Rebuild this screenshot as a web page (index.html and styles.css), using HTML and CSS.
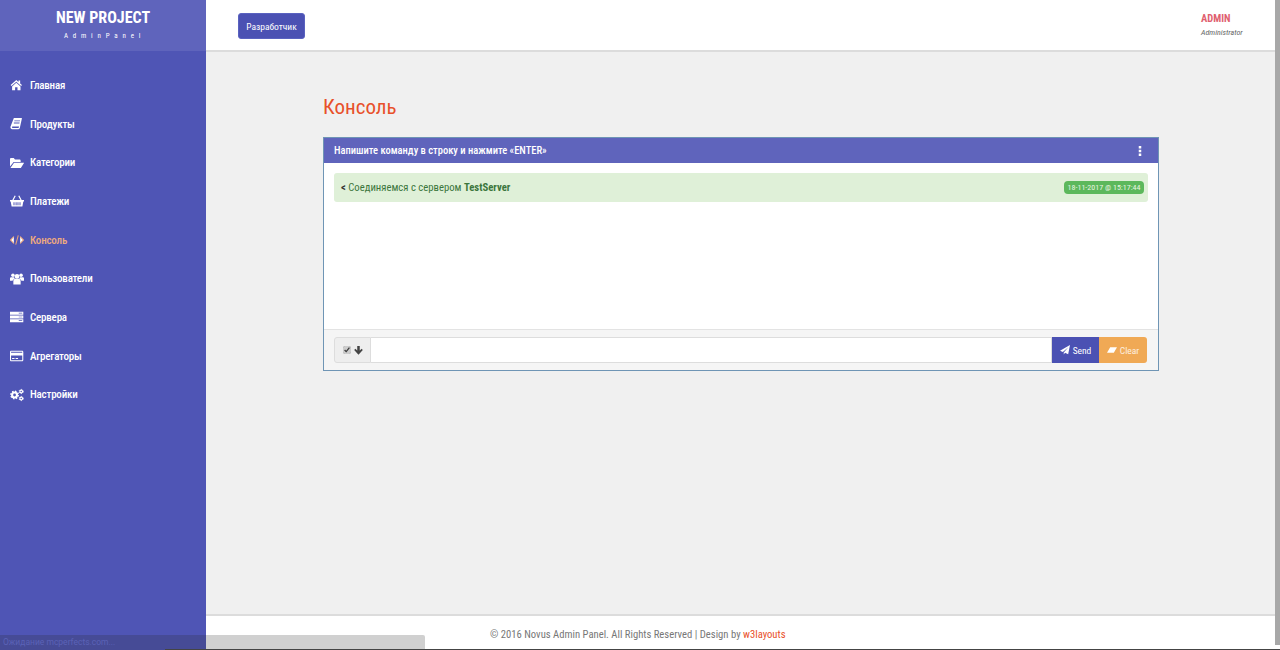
FILE: index.html
```html
<!DOCTYPE html>
<html lang="ru">
<head>
<meta charset="utf-8">
<title>Консоль</title>
<link rel="stylesheet" href="styles.css">
</head>
<body>
<div class="app">
  <aside class="sidebar">
    <div class="logo">
      <div class="logo-title">NEW PROJECT</div>
      <div class="logo-sub">AdminPanel</div>
    </div>
    <nav class="menu">
      <a class="item"><svg class="ico" viewBox="0 -2 20 20"><path d="M9 .8.9 8l1.200 1.400L9 3.300l6.900 6.100L17.100 8l-2.600-2.300V1.500h-2.300v2.100zM3 10v5.500h4.300v-4.200h3.400v4.200H15V10L9 4.800z"/></svg><span>Главная</span></a>
      <a class="item"><svg class="ico" viewBox="0 -2 20 20"><path d="M5.500-.5H17l-.3 2-2.700 12.300c-.2 1-.9 1.700-2 1.700H3C1.500 15.500.6 14.200.6 12.800c0-.5.100-1 .3-1.600zM6.200 3v1.200h7.900l.3-1.200zM5.500 6v1.200h7.900l.3-1.200zM3.600 11.400c-.5 0-.8.400-.8 1.100s.5 1.200 1.100 1.200h7.900c.4 0 .7-.2.8-.6l.4-1.700z" fill-rule="evenodd"/></svg><span>Продукты</span></a>
      <a class="item"><svg class="ico" viewBox="0 -2 20 20"><path d="M0 2.500C0 1.500.7.800 1.600.8h3.800l1.700 2.200h6.500c.9 0 1.600.7 1.600 1.600V6.600H5.200L0 13zM5.800 7.800H20.200l-4.700 7.400H.6z"/></svg><span>Категории</span></a>
      <a class="item"><svg class="ico" viewBox="0 -2 20 20"><path d="M0 6.500h3.300L6.700 0l1.500.8L5.200 6.500h9.600L11.800.8 13.300 0l3.400 6.500H20v2.300h-1l-1.300 6.900H2.300L1 8.800H0zM5 9.800v4.400h1.400V9.800zM8 9.800v4.400h1.400V9.800zM10.700 9.800v4.400h1.400V9.800zM13.600 9.800v4.400H15V9.800z" fill-rule="evenodd"/></svg><span>Платежи</span></a>
      <a class="item active"><svg class="ico" viewBox="0 -2 20 20" fill="none"><path class="stroked" d="M5.500 3 .8 8l4.700 5M14.500 3l4.700 5-4.700 5M11.800 1.500 8.200 14.500"/></svg><span>Консоль</span></a>
      <a class="item"><svg class="ico" viewBox="0 -2 20 20"><circle cx="10" cy="4.300" r="3.300"/><circle cx="4.200" cy="2.500" r="2.500"/><circle cx="15.800" cy="2.500" r="2.500"/><path d="M4.800 15.800V11c0-2 1.500-3.200 3-3.200h4.400c1.500 0 3 1.200 3 3.200v4.800zM0 10.500V7.200c0-1 .8-1.800 1.800-1.800h4.100c.2 1.100.7 1.700 1.100 2.200-1.700.5-2.900 1.400-3.200 2.900zM20 10.500V7.200c0-1-.8-1.800-1.800-1.800h-4.100c-.2 1.100-.7 1.700-1.100 2.200 1.700.5 2.900 1.400 3.200 2.900z"/></svg><span>Пользователи</span></a>
      <a class="item"><svg class="ico" viewBox="0 -2 20 20"><path d="M0 .5h19v4.300H0zM0 5.800h19v4.300H0zM0 11.100h19v4.300H0z"/><path class="cut" d="M12.500 2h5v1h-5zM12.500 7.500h5v1h-5zM12.500 12.800h5v1h-5z"/></svg><span>Сервера</span></a>
      <a class="item"><svg class="ico" viewBox="0 -2 20 20"><path fill-rule="evenodd" d="M1.800 .5h15.400c1 0 1.800.8 1.800 1.800v11.400c0 1-.8 1.800-1.800 1.800H1.800c-1 0-1.800-.8-1.800-1.800V2.300C0 1.300.8.500 1.800.5zM1.500 2v1.200h16V2zM1.500 7.300V14h16V7.300zM3 11h3.500v1.400H3zM8 11h3.500v1.400H8z"/></svg><span>Агрегаторы</span></a>
      <a class="item"><svg class="ico" viewBox="0 -2 20 20"><g class="gear"><circle class="gear-hub" cx="6.500" cy="8" r="3.500"/><circle class="gear-teeth" cx="6.500" cy="8" r="5.300"/><circle class="gear-hub small" cx="16" cy="3" r="1.900"/><circle class="gear-teeth small" cx="16" cy="3" r="3"/><circle class="gear-hub small" cx="16" cy="13" r="1.900"/><circle class="gear-teeth small" cx="16" cy="13" r="3"/></g></svg><span>Настройки</span></a>
    </nav>
  </aside>
  <div class="content">
    <header class="topbar">
      <button class="dev-btn">Разработчик</button>
      <div class="user">
        <div class="user-name">ADMIN</div>
        <div class="user-role">Administrator</div>
      </div>
    </header>
    <main class="main">
      <h1 class="title">Консоль</h1>
      <section class="panel">
        <div class="panel-head">
          <span>Напишите команду в строку и нажмите «ENTER»</span>
          <svg class="dots" viewBox="0 0 4 12"><path d="M.5 0h3v3h-3zM.5 4.500h3v3h-3zM.5 9h3v3h-3z"/></svg>
        </div>
        <div class="panel-body">
          <div class="msg">
            <span><b class="lt">&lt;</b> Соединяемся с сервером <b>TestServer</b></span>
            <span class="stamp">18-11-2017 @ 15:17:44</span>
          </div>
        </div>
        <div class="panel-foot">
          <div class="addon">
            <input class="check" type="checkbox" checked>
            <svg class="arrow" viewBox="0 0 10 10"><path d="M3.600 0h2.800v5L8.500 3l1.300 1.400L5 9.600.2 4.400 1.500 3l2.100 2z"/></svg>
          </div>
          <input class="cmd" type="text">
          <button class="btn send"><svg class="btn-ico" viewBox="0 0 12 12"><path d="M12 0 9.800 11 6 9.200 4.500 11.500V9L10 2.800 3.400 8.300 0 6.800z"/></svg>Send</button>
          <button class="btn clear"><svg class="btn-ico wide" viewBox="0 0 14 10"><path d="M4.500 1H14L9.500 9H0z"/></svg>Clear</button>
        </div>
      </section>
    </main>
    <footer class="footer">© 2016 Novus Admin Panel. All Rights Reserved | Design by <a class="link">w3layouts</a></footer>
  </div>
</div>
<div class="status">Ожидание mcperfects.com...</div>
<div class="window-edge"></div>
<div class="scroll-strip"></div>
</body>
</html>
```
FILE: styles.css
```css
* { box-sizing: border-box; }
html, body { margin: 0; height: 100%; overflow: hidden; }
body { font-family: Roboto, "Liberation Sans", sans-serif; font-stretch: 75%; background: #f0f0f0; color: #333; position: relative; }
button { font-stretch: 75%; }
.app { display: flex; height: 650px; }

.sidebar { width: 206px; flex: none; background: #4f55b5; color: #fff; }
.logo { height: 51px; background: #5f64bc; text-align: center; padding-top: 9px; }
.logo-title { font-size: 16px; font-weight: 700; line-height: 18px; }
.logo-sub { font-size: 7px; line-height: 9px; margin-top: 5px; letter-spacing: 4.800px; padding-left: 3px; }
.menu { display: flex; flex-direction: column; padding-top: 15px; }
.item { height: 38.7px; display: flex; align-items: center; gap: 6px; padding-left: 10px; font-size: 11px; font-weight: 500; letter-spacing: -.2px; color: #fff; }
.ico { width: 14px; height: 14px; fill: #fff; flex: none; }
.cut { fill: #4f55b5; }
.stroked { stroke: #eba274; stroke-width: 1.500; }
.active { color: #eeaa7e; }
.gear { fill: none; stroke: #fff; }
.gear-hub { stroke-width: 3; }
.gear-teeth { stroke-width: 2; stroke-dasharray: 2.100 2.060; }
.gear-hub.small { stroke-width: 1.700; }
.gear-teeth.small { stroke-width: 1.300; stroke-dasharray: 1.570 1.570; }

.content { flex: 1; display: flex; flex-direction: column; min-width: 0; }
.topbar { height: 52px; flex: none; background: #fff; border-bottom: 2px solid #dcdcdc; display: flex; align-items: center; justify-content: space-between; padding: 2px 36px 0 32px; }
.dev-btn { width: 67px; height: 26px; border: 1px solid #5a62c0; border-radius: 3px; background: #4b51b3; color: #fff; font-family: Roboto, sans-serif; font-size: 9.500px; font-weight: 400; padding: 0; }
.user { width: 43px; }
.user-name { font-size: 10.500px; font-weight: 700; line-height: 12px; color: #e0606f; margin-top: -1px; }
.user-role { font-size: 8px; font-style: italic; line-height: 10px; color: #666; margin-top: 3px; }

.main { flex: 1; padding: 42px 121px 0 117px; }
.title { margin: 0; font-size: 21px; font-weight: 400; line-height: 27px; color: #e8502a; }
.panel { margin-top: 16px; height: 234px; background: #fff; border: 1px solid #6f95b5; display: flex; flex-direction: column; }
.panel-head { height: 25px; flex: none; background: #5f64bc; color: #fff; font-size: 10.500px; font-weight: 500; display: flex; align-items: center; justify-content: space-between; padding: 0 16px 0 10px; }
.dots { width: 4px; height: 10px; fill: #fff; }
.panel-body { flex: 1; padding: 10px; }
.msg { height: 29px; background: #dff0d8; border-radius: 3px; color: #3c763d; font-size: 10.700px; display: flex; align-items: center; justify-content: space-between; padding: 0 4px 0 7px; }
.msg b { font-weight: 700; }
.lt { color: #333; }
.stamp { background: #5cb85c; color: #e8f5e2; font-size: 8px; line-height: 13px; height: 13px; width: 80px; text-align: center; border-radius: 4px; }
.panel-foot { height: 41px; flex: none; background: #f5f5f5; border-top: 1px solid #e3e3e3; display: flex; align-items: center; padding: 0 11px 0 10px; }
.addon { width: 37px; height: 26px; flex: none; background: #eee; border: 1px solid #ddd; border-radius: 3px 0 0 3px; display: flex; align-items: center; justify-content: center; gap: 3px; }
.check { width: 8px; height: 8px; margin: 0; accent-color: #ccc; }
.arrow { width: 9px; height: 9px; fill: #444; }
.cmd { flex: 1; min-width: 0; height: 26px; border: 1px solid #ddd; border-left: 0; background: #fff; padding: 0; }
.btn { height: 26px; border: 0; color: #fff; font-family: Roboto, sans-serif; font-size: 9.500px; font-weight: 400; display: flex; align-items: center; justify-content: center; gap: 3px; padding: 0; flex: none; }
.send { width: 47px; background: #4b51b3; }
.clear { width: 48px; background: #f0a955; border-radius: 0 3px 3px 0; color: #fdf0e0; }
.btn-ico { width: 10px; height: 10px; fill: #fff; }
.wide { width: 10px; height: 8px; }

.footer { height: 36px; flex: none; background: #fff; border-top: 2px solid #dcdcdc; font-size: 10.650px; line-height: 38px; color: #777; padding-left: 284px; }
.link { color: #e8502a; }

.status { position: absolute; left: 0; bottom: 0; width: 425px; height: 15px; background: rgba(40,40,40,.22); color: #5b62b6; font-size: 8.500px; font-stretch: 100%; line-height: 15px; padding-left: 3px; border-radius: 0 2px 0 0; }
.window-edge { position: absolute; left: 165px; right: 0; bottom: 0; height: 1px; background: #444; }
.scroll-strip { position: absolute; right: 0; top: 0; width: 5px; height: 645px; background: #a8a8a8; }
```
